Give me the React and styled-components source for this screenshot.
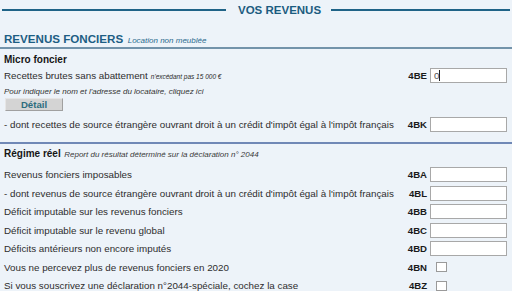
import React from 'react';
import styled, { createGlobalStyle } from 'styled-components';

const GlobalStyle = createGlobalStyle`
  html, body { margin: 0; padding: 0; background: #edf3f9; }
  body { font-family: "Liberation Sans", Arial, sans-serif; color: #2d2d2d; }
`;

const Page = styled.div`
  width: 512px;
  height: 291px;
  overflow: hidden;
  background: #edf3f9;
`;

const TitleBar = styled.div`
  display: grid;
  grid-template-columns: 224px auto 1fr;
  align-items: center;
  height: 20px;
  padding: 0 2px;
`;

const TitleLine = styled.span`
  display: block;
  height: 1.5px;
  background: #1f6387;
`;

const Title = styled.h1`
  margin: 0 10px 0 12px;
  font-size: 11.5px;
  line-height: 20px;
  font-weight: bold;
  color: #1b5c80;
`;

const SectionHead = styled.div`
  margin-top: 12px;
  padding: 0 4px;
  line-height: 12px;
  white-space: nowrap;
  border-bottom: 2px solid #7393aa;
`;

const SectionTitle = styled.h2`
  display: inline;
  margin: 0;
  font-size: 11.6px;
  font-weight: bold;
  color: #1d5e84;
`;

const Note = styled.span`
  margin-left: ${p => p.$gap}px;
  font-style: italic;
  font-weight: normal;
  font-size: ${p => p.$size}px;
  color: ${p => p.$color || '#333'};
`;

const Group = styled.section`
  padding: 0 5px 0 4px;
  border-top: ${p => (p.$divided ? '2px solid #7088b6' : 'none')};
  margin-top: ${p => p.$top || 0}px;
`;

const GroupTitle = styled.div`
  margin-top: ${p => p.$top}px;
  font-size: 10px;
  line-height: 12px;
  font-weight: bold;
  color: #161616;
  white-space: nowrap;
`;

const Row = styled.div`
  display: flex;
  align-items: center;
  height: 18.5px;
  margin-top: ${p => p.$top || 0}px;
  font-size: 9.8px;
`;

const Label = styled.span`
  flex: 1;
  white-space: nowrap;
`;

const Code = styled.span`
  margin-right: 3px;
  font-size: 9.6px;
  font-weight: bold;
  color: #1a1a1a;
`;

const Slot = styled.div`
  position: relative;
  width: 77px;
  display: flex;
  align-items: center;
`;

const TextInput = styled.input`
  box-sizing: border-box;
  width: 77px;
  height: 15px;
  margin: 0;
  padding: 0 0 0 3px;
  border: 1px solid #a8a8a8;
  background: #fff;
  font: 9.8px "Liberation Sans", Arial, sans-serif;
  color: #555;
  outline: none;
`;

const Caret = styled.span`
  position: absolute;
  left: 9px;
  top: 2px;
  width: 1px;
  height: 11px;
  background: #222;
`;

const CheckBox = styled.input`
  appearance: none;
  box-sizing: border-box;
  width: 11px;
  height: 10px;
  margin: 0 0 0 6px;
  border: 1px solid #9a9a9a;
  background: #fff;
`;

const Hint = styled.div`
  margin-top: 2px;
  font-size: 8px;
  line-height: 10px;
  font-style: italic;
  color: #333;
  white-space: nowrap;
`;

const DetailButton = styled.button`
  display: block;
  box-sizing: border-box;
  width: 58px;
  height: 13.5px;
  margin: 1px 0 0 1px;
  padding: 0;
  border: 1px solid;
  border-color: #e6e6e6 #a0a0a0 #a0a0a0 #e6e6e6;
  background: #d4d4d4;
  font: bold 9.6px "Liberation Sans", Arial, sans-serif;
  color: #2d6d7e;
`;

function Field({ label, note, code, type = 'text', value, focused, top }) {
  return (
    <Row $top={top}>
      <Label>
        {label}
        {note && <Note $size={6.5} $gap={3} $color="#2a2a2a">{note}</Note>}
      </Label>
      <Code>{code}</Code>
      <Slot>
        {type === 'check' ? (
          <CheckBox type="checkbox" readOnly />
        ) : (
          <TextInput type="text" defaultValue={value} />
        )}
        {focused && <Caret />}
      </Slot>
    </Row>
  );
}

const reel = [
  { code: '4BB', label: 'Déficit imputable sur les revenus fonciers' },
  { code: '4BC', label: 'Déficit imputable sur le revenu global' },
  { code: '4BD', label: 'Déficits antérieurs non encore imputés' },
  { code: '4BN', label: 'Vous ne percevez plus de revenus fonciers en 2020', type: 'check' },
  { code: '4BZ', label: "Si vous souscrivez une déclaration n°2044-spéciale, cochez la case", type: 'check' },
];

export default function App() {
  return (
    <Page>
      <GlobalStyle />
      <TitleBar>
        <TitleLine />
        <Title>VOS REVENUS</Title>
        <TitleLine />
      </TitleBar>

      <SectionHead>
        <SectionTitle>REVENUS FONCIERS</SectionTitle>
        <Note $size={8} $gap={4.5} $color="#2a6a8e">Location non meublée</Note>
      </SectionHead>

      <Group>
        <GroupTitle $top={5}>Micro foncier</GroupTitle>
        <Field
          label="Recettes brutes sans abattement"
          note="n'excédant pas 15 000 €"
          code="4BE"
          value="0"
          focused
        />
        <Hint>Pour indiquer le nom et l'adresse du locataire, cliquez ici</Hint>
        <DetailButton type="button">Détail</DetailButton>
        <Field
          top={4.5}
          label="- dont recettes de source étrangère ouvrant droit à un crédit d'impôt égal à l'impôt français"
          code="4BK"
        />
      </Group>

      <Group $divided $top={8.3}>
        <GroupTitle $top={4.2}>
          Régime réel
          <Note $size={8} $gap={3.5} $color="#3a3a3a">Report du résultat déterminé sur la déclaration n° 2044</Note>
        </GroupTitle>
        <Field top={4.25} label="Revenus fonciers imposables" code="4BA" />
        <Field
          label="- dont revenus de source étrangère ouvrant droit à un crédit d'impôt égal à l'impôt français"
          code="4BL"
        />
        {reel.map(r => (
          <Field key={r.code} {...r} />
        ))}
      </Group>
    </Page>
  );
}
